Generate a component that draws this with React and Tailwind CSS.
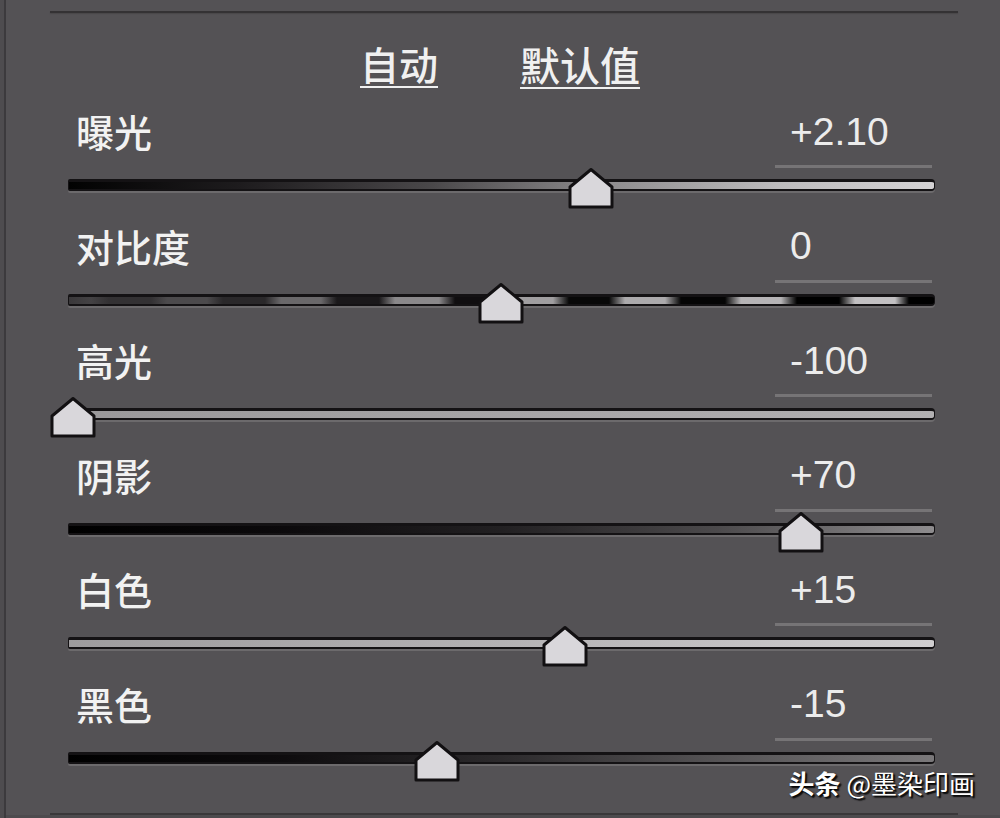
import React from 'react';

const sliders = [
    {
        label: '曝光',
        value: '+2.10',
        left: 'left-[500px]',
        track: 'bg-[linear-gradient(to_right,#020202_0%,#1e1c1e_20%,#4a484a_42%,#8e8c8e_62%,#bdbbbd_82%,#d4d2d4_100%)]',
    },
    {
        label: '对比度',
        value: '0',
        left: 'left-[410px]',
        track: 'bg-[linear-gradient(to_right,#3a383a_0px,#444244_22px,#333133_40px,#333133_82px,#4c4a4c_98px,#4c4a4c_138px,#2a282a_154px,#2a282a_196px,#6a686a_212px,#6a686a_252px,#1a181a_268px,#1a181a_310px,#8a888a_326px,#8a888a_370px,#100e10_386px,#100e10_428px,#a09ea0_444px,#a09ea0_484px,#080808_500px,#080808_540px,#acaaac_556px,#acaaac_596px,#050505_612px,#050505_656px,#b6b4b6_672px,#b6b4b6_712px,#000_728px,#000_770px,#c2c0c2_786px,#c2c0c2_826px,#000_840px,#000_867px)]',
    },
    {
        label: '高光',
        value: '-100',
        left: 'left-[-18px]',
        track: 'bg-[linear-gradient(to_right,#9a989a_0%,#a6a4a6_50%,#b2b0b2_100%)]',
    },
    {
        label: '阴影',
        value: '+70',
        left: 'left-[710px]',
        track: 'bg-[linear-gradient(to_right,#000_0%,#0c0a0c_25%,#222022_50%,#4c4a4c_75%,#8e8c8e_100%)]',
    },
    {
        label: '白色',
        value: '+15',
        left: 'left-[474px]',
        track: 'bg-[linear-gradient(to_right,#9e9c9e_0%,#b4b2b4_50%,#d0ced0_100%)]',
    },
    {
        label: '黑色',
        value: '-15',
        left: 'left-[346px]',
        track: 'bg-[linear-gradient(to_right,#000_0%,#0e0c0e_25%,#2c2a2c_50%,#555355_75%,#7a787a_100%)]',
    },
];

const Thumb = () => (
    <svg width="46" height="41" viewBox="0 0 46 41">
        <path
            d="M23 1.5 L44 19 L44 39 L2 39 L2 19 Z"
            fill="#d9d7db"
            stroke="#121012"
            strokeWidth="3"
            strokeLinejoin="round"
        />
    </svg>
);

const SliderRow = ({ label, value, left, track }) => (
    <div className="h-[114.6px] pl-[62px] pr-[65px]">
        <div className="flex h-[46px] items-center justify-between">
            <span className="ml-[8px] text-[38px] font-medium leading-none text-[#f2f2f2]">{label}</span>
            <span className="mr-[3px] w-[157px] pl-[15px] font-['Liberation_Sans',Arial,sans-serif] text-[39px] leading-none text-[#ececec]">
                {value}
            </span>
        </div>
        <div className="flex justify-end">
            <div className="mr-[3px] mt-[11px] h-[3px] w-[157px] bg-[#767476]" />
        </div>
        <div className="relative mt-[11px] h-[12px]">
            <div
                className={`h-full w-full rounded-l-[2px] rounded-r-[4px] border-x border-b-2 border-t-[3px] border-[#141214] shadow-[0_2px_0_#6c6a6c] ${track}`}
            />
            <div className={`absolute top-[-11px] ${left}`}>
                <Thumb />
            </div>
        </div>
    </div>
);

const App = () => {
    return (
        <div className="relative flex h-[818px] w-[1000px] overflow-hidden bg-[#545255] font-['Noto_Sans_CJK_SC','Noto_Sans',sans-serif]">
            <div className="w-[4px] bg-[#4e4c4f]" />
            <div className="flex flex-1 flex-col border-l-2 border-[#3c3a3d]">
                <div className="ml-[44px] mt-[11px] h-[2px] w-[908px] bg-[#343234] shadow-[0_1px_1px_#4a484a]" />

                <div className="flex h-[95px] items-center pl-[354px] pt-[6px]">
                    <span className="text-[39px] font-medium leading-none text-[#f0f0f0] underline decoration-2 underline-offset-[6px]">自动</span>
                    <span className="ml-[82px] text-[40px] font-medium leading-none text-[#f0f0f0] underline decoration-2 underline-offset-[6px]">默认值</span>
                </div>

                {sliders.map((s, i) => (
                    <SliderRow key={i} {...s} />
                ))}

                <div className="mt-auto ml-[44px] h-[2px] w-[908px] bg-[#3a383a]" />
                <div className="h-[3px] bg-[#4d4b4e]" />
            </div>

            <div className="absolute bottom-[22px] right-[25px] text-[26px] leading-none text-white [text-shadow:1px_1px_2px_#000,2px_2px_1px_#1a1a1a]">
                <span className="font-bold">头条</span>
                <span> @墨染印画</span>
            </div>
        </div>
    );
};

export default App;
